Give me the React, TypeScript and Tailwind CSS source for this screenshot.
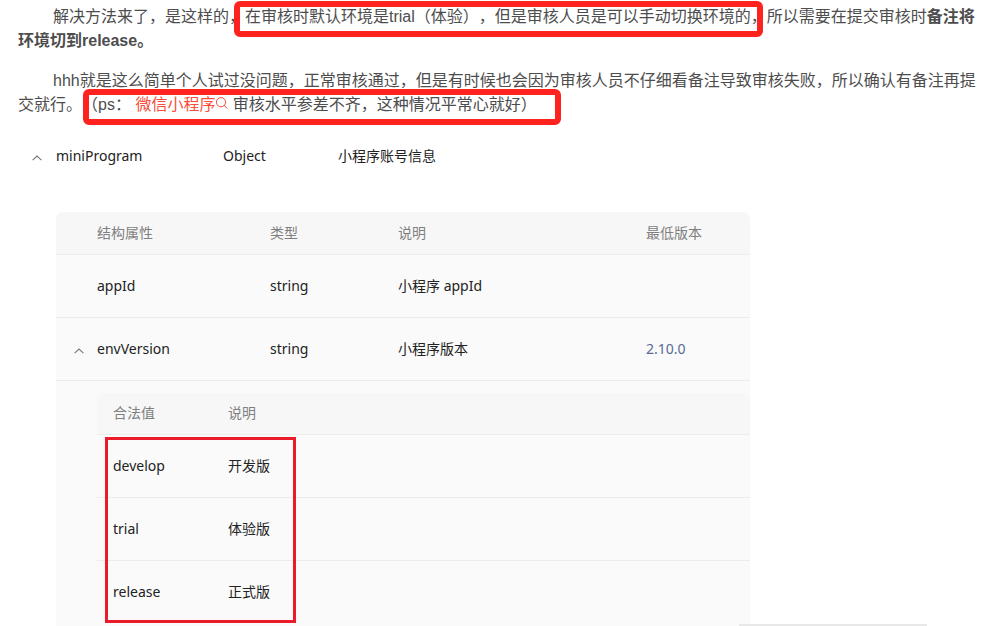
import { ReactNode } from "react";

const structRows = [
  { name: "appId", type: "string", desc: "小程序 appId", version: "", open: false },
  { name: "envVersion", type: "string", desc: "小程序版本", version: "2.10.0", open: true },
];

const envValues = [
  { value: "develop", desc: "开发版" },
  { value: "trial", desc: "体验版" },
  { value: "release", desc: "正式版" },
];

const ToggleButton = ({ label }: { label: string }) => (
  <button type="button" aria-label={label} aria-expanded="true" className="block p-1">
    <svg width="10" height="6" viewBox="0 0 10 6" fill="none" stroke="#777777" strokeWidth="1.1">
      <path d="M0.6 5.2 L5 1 L9.4 5.2" />
    </svg>
  </button>
);

const SearchIcon = () => (
  <svg className="inline-block align-baseline" width="13" height="13" viewBox="0 0 13 13" fill="none" stroke="#fa4d3c">
    <circle cx="6" cy="5.2" r="4.6" />
    <path d="M9.3 8.6 L12.2 11.4" strokeLinecap="round" />
  </svg>
);

const Marked = ({ children, frame }: { children: ReactNode; frame: string }) => (
  <span className="relative inline-block indent-0">
    {children}
    <span className={`absolute rounded-md border-6 border-[#ff231f] pointer-events-none ${frame}`} />
  </span>
);

const EnvValueTable = () => (
  <div className="relative">
    <table className="w-full table-fixed text-left">
      <colgroup>
        <col className="w-[131px]" />
        <col />
      </colgroup>
      <thead>
        <tr className="h-[42px] border-b border-[#ececec] text-[#7f7f7f]">
          <th className="rounded-tl-lg bg-[#f7f7f7] pl-4 font-normal">合法值</th>
          <th className="rounded-tr-lg bg-[#f7f7f7] font-normal">说明</th>
        </tr>
      </thead>
      <tbody>
        {envValues.map((row) => (
          <tr key={row.value} className="h-[63px] border-b border-[#ececec] last:border-b-0">
            <td className="pl-4">{row.value}</td>
            <td>{row.desc}</td>
          </tr>
        ))}
      </tbody>
    </table>
    <div className="absolute left-2 top-11 bottom-px w-[191px] border-3 border-[#ea1b2a] pointer-events-none" />
  </div>
);

const StructTable = () => (
  <table className="w-full table-fixed rounded-t-lg bg-[#fafafa] text-left">
    <colgroup>
      <col className="w-[41px]" />
      <col className="w-[173px]" />
      <col className="w-32" />
      <col />
      <col className="w-[104px]" />
    </colgroup>
    <thead>
      <tr className="h-[42px] border-b border-[#ececec] text-[#7f7f7f]">
        <th className="rounded-tl-lg bg-[#f7f7f7]" />
        <th className="bg-[#f7f7f7] font-normal">结构属性</th>
        <th className="bg-[#f7f7f7] font-normal">类型</th>
        <th className="bg-[#f7f7f7] font-normal">说明</th>
        <th className="rounded-tr-lg bg-[#f7f7f7] font-normal">最低版本</th>
      </tr>
    </thead>
    <tbody>
      {structRows.map((row) => (
        <tr key={row.name} className="h-[63px] border-b border-[#ececec]">
          <td className="pl-[14px] pt-1">{row.open && <ToggleButton label={row.name} />}</td>
          <td>{row.name}</td>
          <td>{row.type}</td>
          <td>{row.desc}</td>
          <td className="text-[#576b95]">{row.version}</td>
        </tr>
      ))}
      <tr>
        <td />
        <td colSpan={4} className="pt-3 pb-0.5">
          <EnvValueTable />
        </td>
      </tr>
    </tbody>
  </table>
);

const App = () => {
  return (
    <div className="relative bg-white">
      <article className="space-y-4 px-[18px] pt-[5px] font-['Liberation_Sans','Noto_Sans_CJK_SC',sans-serif] text-base text-[#4d4d4d] [text-spacing-trim:space-all]">
        <p className="indent-[35px]">
          解决方法来了，是这样的，
          <Marked frame="-left-[11px] right-1 -top-1 -bottom-2">
            在审核时默认环境是trial（体验），但是审核人员是可以手动切换环境的，
          </Marked>
          所以需要在提交审核时<strong>备注将环境切到release。</strong>
        </p>
        <p className="indent-[35px]">
          hhh就是这么简单个人试过没问题，正常审核通过，但是有时候也会因为审核人员不仔细看备注导致审核失败，所以确认有备注再提交就行。
          <Marked frame="left-[1px] -right-6 -top-1 -bottom-2">
            （ps：{" "}
            <a href="#search" className="text-[#fa4d3c]">
              微信小程序
              <SearchIcon />
            </a>{" "}
            审核水平参差不齐，这种情况平常心就好）
          </Marked>
        </p>
      </article>

      <table className="mt-[7px] w-full table-fixed text-left font-['Noto_Sans','Noto_Sans_CJK_SC',sans-serif] text-sm text-[#222222]">
        <colgroup>
          <col className="w-14" />
          <col className="w-[167px]" />
          <col className="w-[115px]" />
          <col />
        </colgroup>
        <tbody>
          <tr className="h-16">
            <td className="pl-7 pt-1">
              <ToggleButton label="miniProgram" />
            </td>
            <td>miniProgram</td>
            <td>Object</td>
            <td>小程序账号信息</td>
          </tr>
          <tr>
            <td />
            <td colSpan={3} className="pt-6 pr-[245px]">
              <StructTable />
            </td>
          </tr>
        </tbody>
      </table>
      <div className="absolute bottom-0 right-[68px] h-0.5 w-[188px] bg-[#e8e8e8]" />
    </div>
  );
};

export default App;
